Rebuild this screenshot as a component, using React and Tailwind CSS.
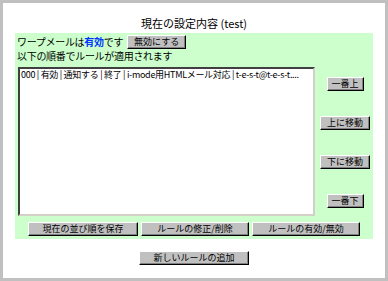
import React from "react";

const font = { fontFamily: '"Noto Sans CJK JP", "Liberation Sans", sans-serif' };

const Btn = ({ children, className = "" }) => (
    <button
        className={`h-[14px] bg-[#c0c0c0] border border-t-white border-l-white border-r-black border-b-black shadow-[inset_-1px_-1px_0_#808080] text-[9px] leading-[12px] text-black flex items-center justify-center ${className}`}
    >
        {children}
    </button>
);

const App = () => {
    return (
        <div className="w-[388px] h-[281px] bg-[#c0c0c0] p-[3px]" style={font}>
            <div className="h-full bg-white flex flex-col">
                {/* Title */}
                <div className="mt-[13px] text-center text-[11px] leading-[15px] text-black">
                    現在の設定内容 (test)
                </div>

                {/* Green panel */}
                <div className="mt-[2px] ml-[12px] w-[358px] bg-[#ccffcc] pl-[2px] pt-[2px] pb-[3px]">
                    <div className="flex items-center h-[14px] text-[10px] leading-[14px] tracking-[-0.3px] text-black">
                        <span className="leading-[14px]">
                            ワープメールは<span className="text-[#0033ff] font-bold">有効</span>です
                        </span>
                        <Btn className="ml-[4px] w-[59px] tracking-normal">無効にする</Btn>
                    </div>
                    <div className="h-[13px] text-[10px] leading-[13px] tracking-[-0.3px] text-black">
                        以下の順番でルールが適用されます
                    </div>

                    {/* List and order buttons */}
                    <div className="flex mt-[5px]">
                        <div className="ml-[1px] w-[297px] h-[149px] bg-white border-2 border-t-[#404040] border-l-[#404040] border-b-[#d4d0c8] border-r-[#d4d0c8] px-[1px] overflow-hidden">
                            <div className="text-[9px] leading-[11px] tracking-[-0.3px] whitespace-nowrap text-black">
                                000 | 有効 | 通知する | 終了 | i-mode用HTMLメール対応 | t-e-s-t@t-e-s-t....
                            </div>
                        </div>

                        <div className="flex-1 flex flex-col items-center justify-between pt-[10px] pb-[8px] pl-[2px]">
                            <Btn className="w-[37px]">一番上</Btn>
                            <Btn className="w-[50px]">上に移動</Btn>
                            <Btn className="w-[50px]">下に移動</Btn>
                            <Btn className="w-[37px]">一番下</Btn>
                        </div>
                    </div>

                    <div className="flex mt-[6px] ml-[11px] gap-[3px]">
                        <Btn className="w-[110px]">現在の並び順を保存</Btn>
                        <Btn className="w-[108px]">ルールの修正/削除</Btn>
                        <Btn className="w-[108px]">ルールの有効/無効</Btn>
                    </div>
                </div>

                <div className="mt-[12px] flex justify-center">
                    <Btn className="w-[110px]">新しいルールの追加</Btn>
                </div>
            </div>
        </div>
    );
};

export default App;
